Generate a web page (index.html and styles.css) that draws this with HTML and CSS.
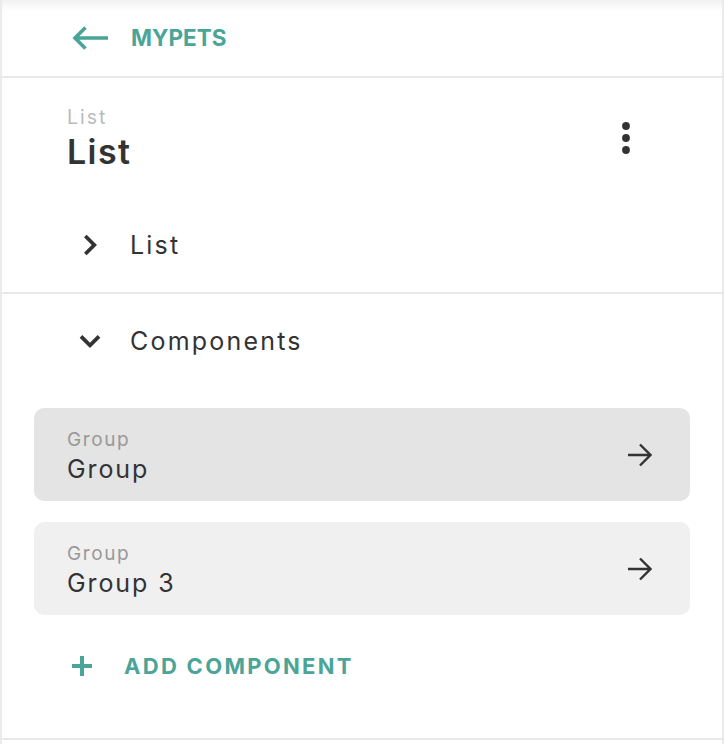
FILE: index.html
```html
<!DOCTYPE html>
<html>
<head>
<meta charset="utf-8">
<link rel="stylesheet" href="styles.css">
</head>
<body>
<div class="panel">
  <header class="topbar">
    <a class="back">
      <svg class="back-icon" width="36" height="24" viewBox="0 0 36 24"><path d="M36 12H3M13.5 1.5L3 12l10.5 10.5" fill="none" stroke="#4aa597" stroke-width="3.6"/></svg>
      <span>MYPETS</span>
    </a>
  </header>
  <section class="section head">
    <div class="title-row">
      <div class="titles">
        <div class="overline">List</div>
        <div class="title">List</div>
      </div>
      <svg class="kebab" width="10" height="32" viewBox="0 0 10 32"><circle cx="5" cy="4" r="3.9" fill="#333"/><circle cx="5" cy="16" r="3.9" fill="#333"/><circle cx="5" cy="28" r="3.9" fill="#333"/></svg>
    </div>
    <div class="expander">
      <svg class="chev" width="40" height="40" viewBox="0 0 24 24"><path d="M10 5.8L8.4 7.4 13 12l-4.6 4.6L10 18.2l6.2-6.2z" fill="#333"/></svg>
      <span>List</span>
    </div>
  </section>
  <section class="section comps">
    <div class="expander">
      <svg class="chev" width="40" height="40" viewBox="0 0 24 24"><path d="M16.6 8.4L12 13 7.4 8.4 5.8 10l6.2 6.2 6.2-6.2z" fill="#333"/></svg>
      <span>Components</span>
    </div>
    <div class="cards">
      <div class="card active">
        <div class="card-text">
          <div class="card-over">Group</div>
          <div class="card-name">Group</div>
        </div>
        <svg class="arrow" width="24" height="24" viewBox="0 0 24 24"><path d="M0 12h22M12 1.5L22.5 12 12 22.5" fill="none" stroke="#333" stroke-width="2.4"/></svg>
      </div>
      <div class="card">
        <div class="card-text">
          <div class="card-over">Group</div>
          <div class="card-name">Group 3</div>
        </div>
        <svg class="arrow" width="24" height="24" viewBox="0 0 24 24"><path d="M0 12h22M12 1.5L22.5 12 12 22.5" fill="none" stroke="#333" stroke-width="2.4"/></svg>
      </div>
    </div>
    <div class="add">
      <svg class="plus" width="20" height="20" viewBox="0 0 20 20"><path d="M10 0v20M0 10h20" fill="none" stroke="#4aa597" stroke-width="4"/></svg>
      <span>ADD COMPONENT</span>
    </div>
  </section>
</div>
</body>
</html>
```
FILE: styles.css
```css
html, body {
  margin: 0;
  padding: 0;
  background: #fff;
}
body {
  font-family: Inter, "Open Sans", sans-serif;
  color: #333;
}
.panel {
  width: 720px;
  height: 744px;
  border-left: 2px solid #ebebeb;
  border-right: 2px solid #ebebeb;
  display: flex;
  flex-direction: column;
}
.topbar {
  height: 78px;
  box-sizing: border-box;
  border-bottom: 2px solid #e8e8e8;
  box-shadow: inset 0 10px 10px -6px rgba(0,0,0,0.07);
  display: flex;
  align-items: center;
  padding-left: 70px;
}
.back {
  display: flex;
  align-items: center;
  gap: 23px;
  color: #4aa597;
  font-weight: 700;
  font-size: 22.5px;
  letter-spacing: 0;
  line-height: 28px;
}
.section {
  border-bottom: 2px solid #e8e8e8;
  box-sizing: border-box;
}
.head {
  height: 216px;
  padding-top: 27px;
}
.title-row {
  display: flex;
  justify-content: space-between;
  padding: 0 91px 0 65px;
  align-items: flex-start;
}
.overline {
  color: #bbb;
  font-size: 19.5px;
  line-height: 24px;
  letter-spacing: 2px;
}
.title {
  margin-top: 1px;
  color: #333;
  font-size: 34px;
  font-weight: 600;
  line-height: 44px;
  letter-spacing: 1.4px;
}
.kebab {
  margin-top: 17px;
}
.expander {
  display: flex;
  align-items: center;
  gap: 20px;
  padding-left: 68px;
  font-size: 25px;
  letter-spacing: 2.2px;
  color: #333;
  height: 48px;
}
.head .expander {
  margin-top: 47px;
}
.comps {
  padding-top: 23px;
  height: 446px;
}
.cards {
  margin-top: 43px;
  padding: 0 32px;
  display: flex;
  flex-direction: column;
  gap: 21px;
}
.card {
  height: 93px;
  border-radius: 10px;
  background: #f0f0f0;
  display: flex;
  align-items: center;
  justify-content: space-between;
  padding: 0 38px 0 33px;
}
.card.active {
  background: #e4e4e4;
}
.card-text {
  padding-top: 4px;
}
.card-over {
  color: #999;
  font-size: 19px;
  line-height: 24px;
  letter-spacing: 1.6px;
}
.card-name {
  margin-top: 1px;
  color: #333;
  font-size: 25px;
  line-height: 32px;
  letter-spacing: 1.9px;
}
.add {
  display: flex;
  align-items: center;
  gap: 32px;
  padding-left: 70px;
  margin-top: 36px;
  height: 30px;
  color: #4aa597;
  font-weight: 700;
  font-size: 22px;
  letter-spacing: 2.3px;
}
```
